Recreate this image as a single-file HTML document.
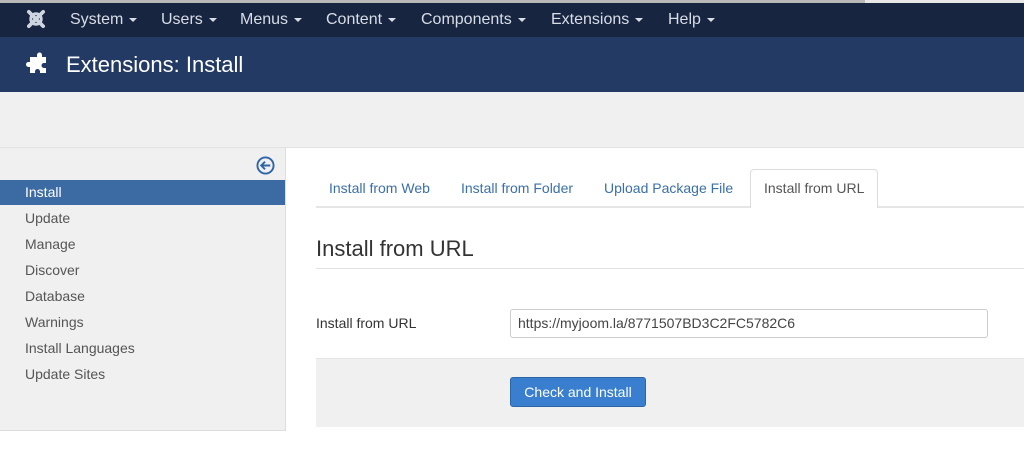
<!DOCTYPE html>
<html><head><meta charset="utf-8"><style>
*{margin:0;padding:0;box-sizing:border-box}
body{width:1024px;height:455px;overflow:hidden;background:#fff;font-family:"Liberation Sans",sans-serif;position:relative}
.abs{position:absolute}
.top{left:0;top:0;width:1024px;height:3px;background:#b9b9b9}
.top2{left:865px;top:0;width:159px;height:3px;background:#e8e8e8}
.nav{left:0;top:3px;width:1024px;height:34px;background:#172541;color:#d8dde6;font-size:16px}
.nav span{position:absolute;top:8px}
.car{display:inline-block;width:0;height:0;border-left:4px solid transparent;border-right:4px solid transparent;border-top:4px solid #d8dde6;vertical-align:middle;margin-left:6px}
.hdr{left:0;top:37px;width:1024px;height:55px;background:#233a64;color:#fff;font-size:22px}
.gray{left:0;top:92px;width:1024px;height:56px;background:#f0f0f0;border-bottom:1px solid #e2e2e2}
.side{left:0;top:148px;width:286px;height:283px;background:#f0f0f0;border-right:1px solid #ddd;border-bottom:1px solid #ddd}
.act{left:0;top:180px;width:285px;height:25px;background:#3c6ba3}
.tab{position:absolute;top:180px;font-size:14px;color:#3a70a8}
.form{left:316px;top:358px;width:708px;height:69px;background:#f0f0f0;border-top:1px solid #e4e4e4}
</style></head><body>
<div class="abs top"></div><div class="abs top2"></div>
<div class="abs nav">
<svg class="abs" style="left:25px;top:5px" width="22" height="22" viewBox="0 0 20 20" fill="none" stroke="#cfd5df" stroke-width="3.4" stroke-linecap="round"><path d="M3.5 3.5 L16.5 16.5 M16.5 3.5 L3.5 16.5"/><circle cx="10" cy="10" r="4.8" stroke-width="2.6"/></svg>
<span style="left:70px">System<i class="car"></i></span>
<span style="left:161px">Users<i class="car"></i></span>
<span style="left:240px">Menus<i class="car"></i></span>
<span style="left:326px">Content<i class="car"></i></span>
<span style="left:421px">Components<i class="car"></i></span>
<span style="left:551px">Extensions<i class="car"></i></span>
<span style="left:668px">Help<i class="car"></i></span>
</div>
<div class="abs hdr">
<svg class="abs" style="left:26px;top:14px" width="24" height="24" viewBox="0 0 24 24" fill="#fff"><path d="M8 6h3V4a2.5 2.5 0 0 1 5 0v2h4v6h-2a2.5 2.5 0 0 0 0 5h2v5h-6v-1.5a2.5 2.5 0 0 0-5 0V22H4v-6H2.5a2.5 2.5 0 0 1 0-5H4V6z"/></svg>
<span class="abs" style="left:66px;top:15px">Extensions: Install</span>
</div>
<div class="abs gray"></div>
<div class="abs side">
<svg class="abs" style="left:256px;top:8px" width="19" height="19" viewBox="0 0 20 20" fill="none" stroke="#2f66a8" stroke-width="2"><circle cx="10" cy="10" r="8.5"/><path d="M15 10H6M9.5 6L5.5 10l4 4"/></svg>
</div>
<div class="abs act"></div>
<div class="abs" style="left:25px;top:184px;font-size:14px;color:#fff">Install</div>
<div class="abs" style="left:25px;top:210px;font-size:14px;color:#555">Update</div>
<div class="abs" style="left:25px;top:236px;font-size:14px;color:#555">Manage</div>
<div class="abs" style="left:25px;top:262px;font-size:14px;color:#555">Discover</div>
<div class="abs" style="left:25px;top:288px;font-size:14px;color:#555">Database</div>
<div class="abs" style="left:25px;top:314px;font-size:14px;color:#555">Warnings</div>
<div class="abs" style="left:25px;top:340px;font-size:14px;color:#555">Install Languages</div>
<div class="abs" style="left:25px;top:366px;font-size:14px;color:#555">Update Sites</div>
<div class="abs" style="left:316px;top:206px;width:708px;height:2px;background:#e6e6e6"></div>
<div class="abs" style="left:750px;top:169px;width:128px;height:39px;background:#fff;border:1px solid #ddd;border-bottom:none;border-radius:4px 4px 0 0"></div>
<span class="tab" style="left:329px">Install from Web</span>
<span class="tab" style="left:461px">Install from Folder</span>
<span class="tab" style="left:604px">Upload Package File</span>
<span class="tab" style="left:764px;color:#555">Install from URL</span>
<div class="abs" style="left:316px;top:236px;font-size:22px;color:#333">Install from URL</div>
<div class="abs" style="left:316px;top:268px;width:708px;height:1px;background:#e2e2e2"></div>
<div class="abs" style="left:316px;top:315px;font-size:14px;color:#333">Install from URL</div>
<div class="abs" style="left:510px;top:309px;width:478px;height:29px;border:1px solid #ccc;border-radius:3px;font-size:14px;color:#444;padding:5px 7px">https://myjoom.la/8771507BD3C2FC5782C6</div>
<div class="abs form"></div>
<div class="abs" style="left:510px;top:377px;width:136px;height:30px;background:#3a7fcf;border:1px solid #2b66a8;border-radius:3px;color:#fff;font-size:14px;text-align:center;line-height:28px">Check and Install</div>
</body></html>
